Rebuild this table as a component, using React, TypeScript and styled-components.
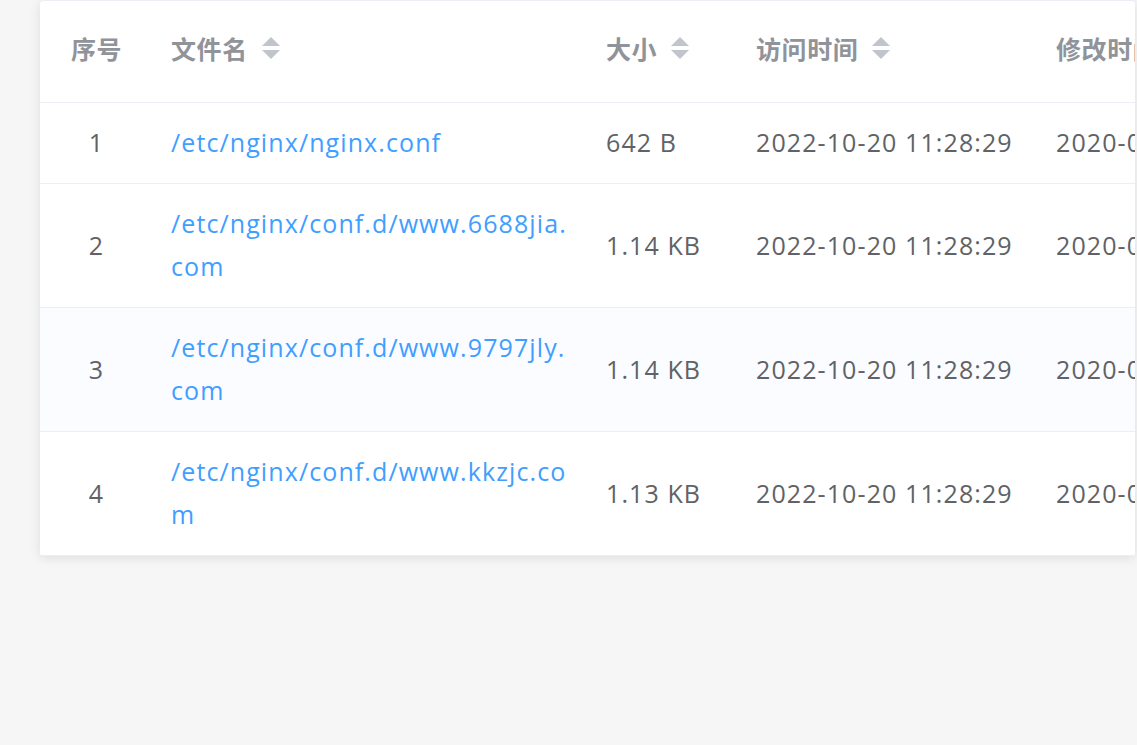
import React from "react";
import styled, { createGlobalStyle } from "styled-components";

const GlobalStyle = createGlobalStyle`
  html, body {
    margin: 0;
    padding: 0;
    background: #f6f6f6;
    font-family: "Open Sans", "Noto Sans CJK SC", sans-serif;
  }
  #root { width: 1137px; height: 745px; overflow: hidden; }
`;

const Page = styled.div`
  width: 1137px;
  height: 745px;
  padding: 0 2px 0 40px;
  box-sizing: border-box;
`;

const Card = styled.div`
  background: #fff;
  border-radius: 4px;
  box-shadow: 0 2px 12px 0 rgba(0, 0, 0, 0.1);
  overflow: hidden;
  border-top: 1px solid #ebeef5;
`;

const Table = styled.table`
  table-layout: fixed;
  border-collapse: collapse;
  width: 1298px;
  font-size: 25px;
  color: #606266;
`;

const Th = styled.th<{ $center?: boolean }>`
  height: 101px;
  padding: 0 18px 6px;
  box-sizing: border-box;
  text-align: ${(p) => (p.$center ? "center" : "left")};
  font-weight: 700;
  color: #909399;
  letter-spacing: 0.6px;
  border-bottom: 1px solid #ebeef5;
  white-space: nowrap;
  vertical-align: middle;
`;

const HeadInner = styled.div`
  display: inline-flex;
  align-items: center;
  gap: 14px;
`;

const Caret = styled.span`
  display: inline-flex;
  flex-direction: column;
  gap: 4px;
  &::before,
  &::after {
    content: "";
    width: 0;
    height: 0;
    border-left: 9.5px solid transparent;
    border-right: 9.5px solid transparent;
  }
  &::before {
    border-bottom: 9px solid #c0c4cc;
  }
  &::after {
    border-top: 9px solid #c0c4cc;
  }
`;

const Row = styled.tr<{ $striped?: boolean }>`
  background: ${(p) => (p.$striped ? "#fafcff" : "#fff")};
`;

const Td = styled.td<{ $center?: boolean }>`
  padding: 18.5px 18px;
  line-height: 43px;
  letter-spacing: 1.1px;
  text-align: ${(p) => (p.$center ? "center" : "left")};
  border-bottom: 1px solid #ebeef5;
  word-break: break-all;
  vertical-align: middle;
`;

const NowrapTd = styled(Td)`
  white-space: nowrap;
  overflow: hidden;
`;

const Link = styled.span`
  color: #409eff;
  cursor: pointer;
`;

const rows = [
  { name: "/etc/nginx/nginx.conf", size: "642 B" },
  { name: "/etc/nginx/conf.d/www.6688jia.com", size: "1.14 KB" },
  { name: "/etc/nginx/conf.d/www.9797jly.com", size: "1.14 KB" },
  { name: "/etc/nginx/conf.d/www.kkzjc.com", size: "1.13 KB" },
];

export default function App() {
  return (
    <>
      <GlobalStyle />
      <Page>
        <Card>
          <Table>
            <colgroup>
              <col style={{ width: 113 }} />
              <col style={{ width: 435 }} />
              <col style={{ width: 150 }} />
              <col style={{ width: 300 }} />
              <col style={{ width: 300 }} />
            </colgroup>
            <thead>
              <tr>
                <Th $center>序号</Th>
                <Th>
                  <HeadInner>
                    文件名
                    <Caret />
                  </HeadInner>
                </Th>
                <Th>
                  <HeadInner>
                    大小
                    <Caret />
                  </HeadInner>
                </Th>
                <Th>
                  <HeadInner>
                    访问时间
                    <Caret />
                  </HeadInner>
                </Th>
                <Th>
                  <HeadInner>
                    修改时间
                    <Caret />
                  </HeadInner>
                </Th>
              </tr>
            </thead>
            <tbody>
              {rows.map((r, i) => (
                <Row key={r.name} $striped={i === 2}>
                  <Td $center>{i + 1}</Td>
                  <Td>
                    <Link>{r.name}</Link>
                  </Td>
                  <NowrapTd>{r.size}</NowrapTd>
                  <NowrapTd>2022-10-20 11:28:29</NowrapTd>
                  <NowrapTd>2020-09-16 10:12:05</NowrapTd>
                </Row>
              ))}
            </tbody>
          </Table>
        </Card>
      </Page>
    </>
  );
}
